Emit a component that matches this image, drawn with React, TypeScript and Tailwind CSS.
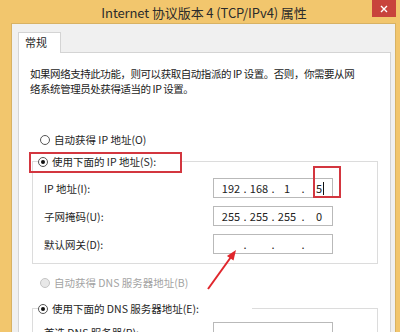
import React from "react";

const font = "font-['Noto_Sans_CJK_SC','Noto_Sans',sans-serif]";

function Radio({ checked, disabled }: { checked?: boolean; disabled?: boolean }) {
    return (
        <span
            className={
                disabled
                    ? "w-[10px] h-[10px] rounded-full border border-[#c4c4c4] bg-[#e8e8e8] shrink-0"
                    : "w-[10px] h-[10px] rounded-full border border-[#555] bg-white shrink-0 flex items-center justify-center"
            }
        >
            {checked && <span className="w-[4px] h-[4px] rounded-full bg-[#111]" />}
        </span>
    );
}

function IpBox({ parts, cursor }: { parts: string[]; cursor?: boolean }) {
    return (
        <div className="w-[120px] h-[20px] border border-[#b9b9b9] bg-white flex items-center pl-[5px] text-[11px] text-[#222]">
            {parts.map((p, i) => (
                <React.Fragment key={i}>
                    <span className="w-[24px] text-center relative">
                        {p}
                        {cursor && i === 3 && (
                            <span className="absolute left-[16px] top-[1px] w-[1px] h-[13px] bg-[#111]" />
                        )}
                    </span>
                    {i < 3 && <span className={i === 2 ? "w-[8px] text-center" : "w-[4px] text-center"}>.</span>}
                </React.Fragment>
            ))}
        </div>
    );
}

function Row({ label, children }: { label: string; children: React.ReactNode }) {
    return (
        <div className="flex items-center h-[20px]">
            <span className="w-[169px] whitespace-nowrap">{label}</span>
            {children}
        </div>
    );
}

export default function App() {
    return (
        <div className={`relative w-[400px] h-[332px] overflow-hidden bg-[#f2c66d] ${font} text-[10.5px] leading-[15px] text-[#1e1e1e]`}>
            {/* title bar */}
            <div className="relative h-[23px] flex items-center justify-center">
                <span className="text-[13px] text-[#2b2b2b] pl-[8px] pt-[2px] tracking-[-0.1px]">Internet 协议版本 4 (TCP/IPv4) 属性</span>
                <div className="absolute right-[4px] top-0 w-[24px] h-[17px] bg-[#c8433c] flex items-center justify-center">
                    <svg width="8" height="8" viewBox="0 0 8 8">
                        <path d="M1 1 L7 7 M7 1 L1 7" stroke="#fff" strokeWidth="1.4" />
                    </svg>
                </div>
            </div>

            {/* body */}
            <div className="ml-[11px] mr-[4px] h-[309px] bg-[#f0f0f0] border-l border-t border-r border-[#d8b263] pl-[6px] pr-[4px] pt-[8px]">
                <div className="flex">
                    <div className="w-[43px] h-[21px] bg-white border border-b-0 border-[#d4d4d4] relative z-10 pl-[6px] pt-[2px] text-[11px]">
                        常规
                    </div>
                </div>
                <div className="-mt-px h-[300px] bg-white border border-[#d4d4d4] pt-[13px]">
                    <div className="pl-[11px] whitespace-nowrap tracking-[-0.45px] text-[#1a1a1a]">
                        如果网络支持此功能，则可以获取自动指派的 IP 设置。否则，你需要从网
                        <br />
                        络系统管理员处获得适当的 IP 设置。
                    </div>

                    <div className="mt-[36px] pl-[21px] flex items-center gap-[4px] whitespace-nowrap">
                        <Radio />
                        <span>自动获得 IP 地址(O)</span>
                    </div>

                    <fieldset className="mt-[7px] ml-[13px] mr-[12px] border border-[#dcdcdc] pl-[11px] pt-[9px] pb-[9px]">
                        <legend className="ml-[-6px] w-[143px] flex items-center gap-[4px] whitespace-nowrap">
                            <Radio checked />
                            <span>使用下面的 IP 地址(S):</span>
                        </legend>
                        <div className="flex flex-col gap-[8px]">
                            <Row label="IP 地址(I):">
                                <IpBox parts={["192", "168", "1", "5"]} cursor />
                            </Row>
                            <Row label="子网掩码(U):">
                                <IpBox parts={["255", "255", "255", "0"]} />
                            </Row>
                            <Row label="默认网关(D):">
                                <IpBox parts={["", "", "", ""]} />
                            </Row>
                        </div>
                    </fieldset>

                    <div className="mt-[11px] pl-[21px] flex items-center gap-[4px] whitespace-nowrap text-[#a3a3a3]">
                        <Radio disabled />
                        <span>自动获得 DNS 服务器地址(B)</span>
                    </div>

                    <fieldset className="mt-[11px] ml-[13px] mr-[12px] border border-[#dcdcdc] pl-[11px] pt-[6px] pb-[9px]">
                        <legend className="ml-[-6px] w-[214px] flex items-center gap-[4px] whitespace-nowrap">
                            <Radio checked />
                            <span>使用下面的 DNS 服务器地址(E):</span>
                        </legend>
                        <div className="flex flex-col gap-[8px]">
                            <Row label="首选 DNS 服务器(P):">
                                <IpBox parts={["", "", "", ""]} />
                            </Row>
                            <Row label="备用 DNS 服务器(A):">
                                <IpBox parts={["", "", "", ""]} />
                            </Row>
                        </div>
                    </fieldset>
                </div>
            </div>

            {/* annotations */}
            <div className="absolute left-[29px] top-[152px] w-[153px] h-[21px] border-2 border-[#d3363f]" />
            <div className="absolute left-[313px] top-[166px] w-[28px] h-[32px] border-2 border-[#d3363f]" />
            <svg className="absolute left-[200px] top-[240px]" width="50" height="60" viewBox="0 0 50 60">
                <path d="M8 49 L31 17" stroke="#e0262c" strokeWidth="2" />
                <path d="M36 10 L33.5 20.5 L26.9 15.9 Z" fill="#e0262c" />
            </svg>
        </div>
    );
}
